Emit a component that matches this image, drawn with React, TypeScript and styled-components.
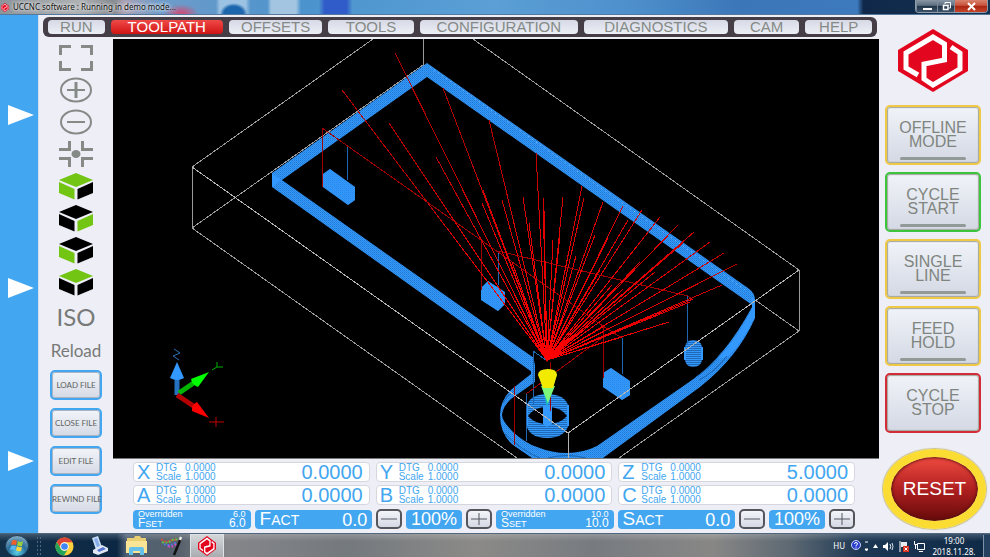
import React from "react";
import styled, { createGlobalStyle } from "styled-components";

const SANS = '"Liberation Sans", Arial, sans-serif';
const SLIM = 'Lato, "Liberation Sans", Arial, sans-serif';
const BLUE = "#43a6f0";
const GREY = "#858a87";

const GlobalStyle = createGlobalStyle`
  * { box-sizing: border-box; }
  body { margin: 0; background: #eeeef7; font-family: ${SANS}; }
  button { margin: 0; padding: 0; border: 0; background: none; font-family: inherit; cursor: pointer; }
  svg { display: block; }
`;

const Window = styled.div`
  display: grid;
  grid-template-rows: 15px 1fr 25px;
  min-height: 100vh;
`;

/* ---------- title bar ---------- */

const TitleBar = styled.header`
  display: flex;
  align-items: center;
  gap: 4px;
  padding-left: 1px;
  border-bottom: 1px solid #56789b;
  background:
    radial-gradient(ellipse 14px 11px at 23.6% 100%, #1c66ad 70%, transparent 100%),
    radial-gradient(ellipse 18px 10px at 18.3% 100%, #c4557f 20%, transparent 100%),
    linear-gradient(90deg, transparent 21.8%, #9cc2e3 22.2%, #9cc2e3 24.8%, transparent 25.3%, transparent 27%, #a3c5e2 27.4%, #a3c5e2 29.9%, transparent 30.4%, transparent 32.2%, #2f5cc8 32.8%, #2f5cc8 35%, transparent 35.6%),
    linear-gradient(90deg, #8d959b 0%, #aeb1b4 8%, #868b90 11.5%, #a9a1b5 12.5%, #6f9cc9 16%, #4b93cd 30%, #5b9fd6 50%, #4d8fcb 64%, #3b76b8 75%, #3d79bd 86.6%, #10294a 87.2%, #14304f 100%);
`;
const Title = styled.h1`
  flex: 1;
  margin: 0;
  font: 400 8px/14px "Noto Sans", sans-serif;
  color: #111;
  text-shadow: 0 0 3px #fff, 0 0 4px #fff;
`;
const WindowControls = styled.div`
  display: flex;
  align-self: flex-start;
  height: 13px;
  margin-right: 2px;
  border: 1px solid #8c9cab;
  border-top: 0;
  border-radius: 0 0 4px 4px;
  overflow: hidden;
`;
const WindowButton = styled.button<{ $w: number; $close?: boolean }>`
  display: grid;
  place-items: center;
  width: ${(p) => p.$w}px;
  border-left: 1px solid #7b8a99;
  background: ${(p) =>
    p.$close
      ? "linear-gradient(#d9836f, #c9523b 45%, #a72410 50%, #c8452a)"
      : "linear-gradient(#8a98a6, #5d6e80 45%, #22364a 50%, #3d5268)"};
`;

/* ---------- main frame ---------- */

const Main = styled.main`
  display: grid;
  grid-template-columns: 39px 1fr 111px;
  background: #eeeef7;
`;
const Drawers = styled.aside`
  display: flex;
  flex-direction: column;
  align-items: center;
  gap: 153px;
  padding: 90px 0 0 4px;
  background: ${BLUE};
  border-right: 1px solid #cfe0f3;
`;
const DrawerButton = styled.button`
  height: 20px;
`;
const Center = styled.div`
  display: flex;
  flex-direction: column;
  min-width: 0;
`;
const Tabs = styled.nav`
  display: grid;
  grid-template-columns: 57fr 113fr 94fr 86fr 159fr 145fr 66fr 67fr;
  gap: 6px;
  height: 20px;
  margin: 2px 2px 2px 4px;
  padding: 3px 5px;
  border-radius: 6px;
  background: #453e47;
`;
const Tab = styled.button<{ $active?: boolean }>`
  min-width: 0;
  border-radius: 4px;
  font-size: 15px;
  line-height: 14px;
  color: ${(p) => (p.$active ? "#fff" : GREY)};
  background: ${(p) =>
    p.$active ? "linear-gradient(#f04a48, #cf1414)" : "linear-gradient(#d7dae6, #eceff5)"};
`;
const Body = styled.div`
  display: grid;
  grid-template-columns: 74px 1fr;
  flex: 1;
`;

/* ---------- view tools ---------- */

const Tools = styled.aside`
  display: flex;
  flex-direction: column;
  align-items: center;
  padding-top: 3px;
`;
const ToolButton = styled.button`
  display: grid;
  place-items: center;
  height: 32px;
`;
const TextTool = styled.button<{ $size: number; $h: number }>`
  height: ${(p) => p.$h}px;
  font: ${(p) => p.$size}px/${(p) => p.$h}px ${SLIM};
  color: #777a77;
`;
const FileButtons = styled.div`
  display: flex;
  flex-direction: column;
  gap: 8px;
  margin-top: 4px;
`;
const FileButton = styled.button`
  display: grid;
  place-items: center;
  width: 52px;
  height: 30px;
  border: 2px solid ${BLUE};
  border-radius: 5px;
  background: linear-gradient(#f1f4f8, #d6dae5);
  box-shadow: inset 0 0 0 1px #aab4c2;
  font: 8px/12px ${SLIM};
  white-space: nowrap;
  color: #5f6360;
`;

/* ---------- work area ---------- */

const Work = styled.section`
  display: flex;
  flex-direction: column;
  min-width: 0;
`;
const Viewer = styled.div`
  flex: 1;
  background: #000;
  border-bottom: 1px solid #777;
`;
const Readouts = styled.div`
  display: flex;
  flex-direction: column;
  padding: 3px 24px 5px 20px;
`;
const AxisGrid = styled.div`
  display: grid;
  grid-template-columns: repeat(3, 1fr);
  gap: 3px 6px;
`;
const AxisBox = styled.div`
  display: grid;
  grid-template-columns: 19px 29px 1fr auto;
  align-items: center;
  height: 20px;
  padding: 0 6px 0 3px;
  border: 1px solid #d6d6de;
  border-radius: 4px;
  background: #fff;
  color: ${BLUE};
`;
const AxisName = styled.span`
  font-size: 20px;
  line-height: 18px;
`;
const AxisInfo = styled.span`
  font-size: 10px;
  line-height: 9px;
  white-space: pre-line;
`;
const AxisValue = styled.output`
  font-size: 20px;
  line-height: 18px;
`;
const FeedRow = styled.div`
  display: grid;
  grid-template-columns: repeat(2, 118fr 118fr 26px 56fr 26px);
  gap: 4px;
  height: 18px;
  margin-top: 5px;
`;
const FeedBox = styled.div<{ $double?: boolean }>`
  display: flex;
  flex-direction: ${(p) => (p.$double ? "column" : "row")};
  justify-content: ${(p) => (p.$double ? "center" : "space-between")};
  align-items: ${(p) => (p.$double ? "stretch" : "center")};
  padding: 0 5px;
  border-radius: 4px;
  background: ${BLUE};
  color: #fff;
`;
const FeedLine = styled.div<{ $size: number; $line: number }>`
  display: flex;
  justify-content: space-between;
  font-size: ${(p) => p.$size}px;
  line-height: ${(p) => p.$line}px;
`;
const FeedName = styled.span`
  font-size: 19px;
  line-height: 18px;
`;
const Small = styled.span<{ $size: number }>`
  font-size: ${(p) => p.$size}px;
`;
const FeedValue = styled.output`
  font-size: 18px;
  line-height: 18px;
`;
const Percent = styled.output`
  border-radius: 4px;
  background: ${BLUE};
  color: #fff;
  text-align: center;
  font-size: 18px;
  line-height: 18px;
`;
const StepButton = styled.button`
  display: grid;
  place-items: center;
  height: 20px;
  margin-top: -1px;
  border: 2px solid #55565c;
  border-radius: 5px;
  background: linear-gradient(#f3f5f9, #d5d9e4);
`;

/* ---------- command column ---------- */

const Commands = styled.aside`
  display: flex;
  flex-direction: column;
  align-items: center;
  padding: 14px 3px 0 0;
`;
const CommandList = styled.div`
  display: flex;
  flex-direction: column;
  gap: 7px;
  margin-top: 13px;
`;
const CommandButton = styled.button<{ $edge: string }>`
  display: flex;
  flex-direction: column;
  align-items: center;
  justify-content: center;
  gap: 8px;
  width: 96px;
  height: 60px;
  padding-top: 11px;
  border: 2px solid ${(p) => p.$edge};
  border-radius: 5px;
  background: linear-gradient(#f0f3f8, #d3d8e4);
  box-shadow: inset 0 0 1px 1px #a4a79d;
  font-size: 16px;
  line-height: 14px;
  color: #80857f;
`;
const Lamp = styled.span<{ $hidden?: boolean }>`
  width: 66px;
  height: 3px;
  border-radius: 2px;
  background: ${(p) => (p.$hidden ? "transparent" : "#929a98")};
`;
const ResetButton = styled.button`
  width: 103px;
  height: 80px;
  margin: 16px 0 3px 3px;
  border: 8px solid #fbdc32;
  border-radius: 50%;
  background: linear-gradient(#ef4a40, #b02020 50%, #650a0a) padding-box;
  box-shadow: 0 0 1px 1px #c9c18c, inset 0 0 3px 1px #5a1010;
  color: #fff;
  font-size: 19px;
`;

/* ---------- task bar ---------- */

const TaskBar = styled.footer`
  display: flex;
  align-items: center;
  border-top: 1px solid #4f6880;
  background:
    linear-gradient(rgba(255, 255, 255, 0.2), transparent 30%),
    linear-gradient(90deg, #12304a 0, #0c2743 11.8%, #4f6174 12.8%, #56606b 18%, #85868a 23%, #74797e 35%, #8b8a88 48%, #777b80 60%, #888786 72%, #5c6872 80%, #1c3753 87%, #0f2a47 100%);
`;
const StartButton = styled.button`
  margin: 0 7px 0 5px;
`;
const Grip = styled.span`
  width: 6px;
  height: 20px;
  background: radial-gradient(circle, #50687f 1px, transparent 1px) 0 0 / 3px 4px;
`;
const TaskButton = styled.button<{ $active?: boolean }>`
  display: grid;
  place-items: center;
  width: ${(p) => (p.$active ? 34 : 36)}px;
  height: 24px;
  border: ${(p) => (p.$active ? "1px solid #dfe3e6" : "0")};
  background: ${(p) => (p.$active ? "linear-gradient(#d4d7da, #a9adb1)" : "none")};
`;
const AppButtons = styled.div`
  display: flex;
  flex: 1;
  margin-left: 4px;
`;
const Tray = styled.div`
  display: flex;
  align-items: center;
  gap: 5px;
  color: #fff;
  font: 8px/12px "Noto Sans", sans-serif;
`;
const Clock = styled.time`
  width: 48px;
  text-align: center;
  line-height: 11px;
`;
const ShowDesktop = styled.button`
  align-self: stretch;
  width: 7px;
  border-left: 1px solid #7e93a8;
  background: #24425f;
`;

/* ---------- icons ---------- */

const Logo = ({ width, height }: { width: number; height: number }) => (
  <svg width={width} height={height} viewBox="0 0 70 63" preserveAspectRatio="none" aria-hidden="true">
    <path d="M35 0 70 21V42L35 63 0 42V21Z" fill="#e3061f" />
    <path d="M20 46 8 39V24L35 8 46.500 15V31L26 35V50L35 56 62 40V24L53 18" fill="none" stroke="#fff" strokeWidth="5" />
  </svg>
);

const Cube = ({ top, left, right }: { top: string; left: string; right: string }) => (
  <svg width="34" height="27" viewBox="0 0 34 27" aria-hidden="true">
    <path d="M17 0 34 7 17 14 0 7Z" fill={top} />
    <path d="M0 9 15.500 16V26.500L0 20Z" fill={left} />
    <path d="M34 9 18.500 16V26.500L34 20Z" fill={right} />
  </svg>
);

const LIME = "#72c613";
const cubes = [
  { name: "Top left view", top: LIME, left: LIME, right: "#000" },
  { name: "Right view", top: "#000", left: "#000", right: LIME },
  { name: "Left view", top: "#000", left: LIME, right: "#000" },
  { name: "Top view", top: LIME, left: "#000", right: "#000" },
];

/* ---------- tool path drawing ---------- */

const rays: number[][] = [
  [395, 53], [342, 90], [389, 123], [436, 157], [443, 88], [489, 120], [536, 153],
  [483, 190], [482, 203], [502, 200], [523, 197], [529, 223], [543, 197], [544, 210],
  [563, 197], [582, 186], [584, 198], [576, 256], [603, 202], [623, 206], [628, 220],
  [642, 210], [660, 217], [678, 225], [683, 243], [694, 232], [710, 242], [724, 253],
  [737, 264], [722, 285], [693, 299], [690, 302], [669, 322], [623, 289], [612, 285],
  [600, 270], [505, 250], [512, 262], [595, 235], [608, 238], [640, 262], [655, 272],
  [603, 327], [622, 337], [560, 235], [553, 240],
];

const blocks = [
  "323 174 330 169 355 187 355 200 348 205 323 187",
  "481 288 488 281 505 292 505 304 498 311 481 300",
  "603 373 611 368 630 381 630 395 622 400 603 387",
];

const Scene = () => (
  <svg width="100%" height="100%" viewBox="113 39 766 419" role="img" aria-label="Tool path">
    <defs>
      <pattern id="hatch" width="2" height="2" patternUnits="userSpaceOnUse">
        <rect width="2" height="2" fill="#3399ff" />
        <rect width="1" height="1" fill="#2277cf" />
        <rect x="1" y="1" width="1" height="1" fill="#2a88e4" />
      </pattern>
      <pattern id="rings" width="2" height="2" patternUnits="userSpaceOnUse">
        <rect width="2" height="2" fill="#3399ff" />
        <rect width="2" height="1" fill="#2069b6" />
      </pattern>
      <radialGradient id="ray" gradientUnits="userSpaceOnUse" cx="547" cy="360" r="300">
        <stop offset="0" stopColor="#ff0000" />
        <stop offset="0.45" stopColor="#e00000" />
        <stop offset="0.8" stopColor="#b40000" />
      </radialGradient>
    </defs>

    <g fill="none" stroke="#9a9a9a" shapeRendering="crispEdges">
      <path d="M192 228V167L373 39M473 39 799 270V331L619 458M423 39V65L192 228 517 458M423 65 799 331" />
    </g>

    <g fill="url(#hatch)">
      <path d="M427 63 272 173V187L282 180 427 77Z" />
      <path d="M427 63 748 288Q755 293 755 300V307L427 77Z" />
      <path d="M272 173 534 358V372H532L272 187Z" />
      <path d="M532 358Q535 361 535 365V382L515 396Q503 404 502 415 502 421 513 432 525 443 537 447 552 453 567 453 583 453 597 446L692 380Q725 357 752 307V297L755 300V318Q738 357 700 387L603 458H532L513 445Q500 434 500 415 500 400 512 389L531 374V360Z" />
    </g>
    <path d="M272 173V187L281 180Z" fill="#3399ff" />
    <path d="M755 300V317Q745 338 729 356L718 359Q738 337 752 309V297Z" fill="#3399ff" />
    <path d="M430 67 748 292" stroke="#8cc4fb" strokeDasharray="1 4" />
    <g fill="none" stroke="#1a63ad" strokeWidth="1">
      <path d="M699 380Q715 372 727 356M696 377Q710 368 722 352M505 434Q524 452 540 458M503 403Q506 396 514 391M548 458Q567 453 586 458" />
    </g>

    <g fill="#3399ff">
      {blocks.map((points) => (
        <polygon key={points} points={points} />
      ))}
    </g>
    <g fill="url(#hatch)" fillOpacity="0.5">
      {blocks.map((points) => (
        <polygon key={points} points={points} />
      ))}
    </g>
    <path d="M685 347Q686 340 693 340 701 340 702 347V360Q701 367 693 367 686 367 685 360Z" fill="url(#rings)" />
    <path d="M685 347V360M702 347V360" stroke="#3399ff" strokeWidth="2" />

    <path d="M526 408Q529 394 547 394 566 394 569 408V423Q566 438 547 438 528 438 526 423Z" fill="url(#rings)" />
    <path d="M528 416Q534 407 547 407 561 407 567 416 560 424 547 424 535 424 528 416Z" fill="#000" />
    <path d="M527 405V426M568 405V426" stroke="#3399ff" strokeWidth="2" />
    <path d="M543 405H552V424L547 427 543 424Z" fill="#3399ff" />

    <g fill="none" stroke="#1f66b3" shapeRendering="crispEdges">
      <path d="M347 145V180M498 251V285M687 296V345M622 338V374M533 351V405M526 394V441M533 351 546 360" />
    </g>
    <g fill="none" stroke="#a00000" shapeRendering="crispEdges">
      <path d="M322 187V128L603 326V378M481 240V290M498 251 688 296 693 300M514 386V445M526 394 602 338M550 362V411M603 326 622 338" />
    </g>
    <g stroke="url(#ray)" shapeRendering="crispEdges">
      {rays.map(([x, y]) => (
        <line key={`${x} ${y}`} x1={x} y1={y} x2="547" y2="360" />
      ))}
    </g>
    <path d="M540 350 547 362 555 350Z" fill="#f00" />

    <path d="M539 374 547 407 557 374Z" fill="#15bfc6" />
    <path d="M541 386 548 403 555 386Z" fill="#7cf77a" />
    <path d="M538 375Q538 369 548 369 557 369 557 375L553 388H543Z" fill="#f2ea00" />

    <g fill="none" stroke="#b4b4b4" shapeRendering="crispEdges">
      <path d="M192 167 568 433 799 270M568 433V458" />
    </g>

    <path d="M177 395V378" stroke="#2670c0" strokeWidth="5" />
    <path d="M170 378 177 362 184 378Q177 382 170 378Z" fill="#3399ff" />
    <path d="M179 393 195 382" stroke="#00b400" strokeWidth="5" />
    <path d="M191 379 209 372 198 387Q192 385 191 379Z" fill="#0f0" />
    <path d="M177 395 195 407" stroke="#b40000" strokeWidth="5" />
    <path d="M197 402 209 418 192 411Q191 405 197 402Z" fill="#f00" />
    <path d="M174 349 180 353 173 356 179 360" fill="none" stroke="#2b70b8" />
    <path d="M217 362V367H223M217 367 212 370" fill="none" stroke="#00b000" />
    <path d="M209 422H224M216 417V427" stroke="#c00000" />
  </svg>
);

/* ---------- data ---------- */

const tabs = ["RUN", "TOOLPATH", "OFFSETS", "TOOLS", "CONFIGURATION", "DIAGNOSTICS", "CAM", "HELP"];
const fileActions = ["LOAD FILE", "CLOSE FILE", "EDIT FILE", "REWIND FILE"];
const axes = [
  { name: "X", value: "0.0000" },
  { name: "Y", value: "0.0000" },
  { name: "Z", value: "5.0000" },
  { name: "A", value: "0.0000" },
  { name: "B", value: "0.0000" },
  { name: "C", value: "0.0000" },
];
const feeds = [
  { letter: "F", set: "6.0" },
  { letter: "S", set: "10.0" },
];
const commands = [
  { lines: ["OFFLINE", "MODE"], edge: "#efc845", lamp: true },
  { lines: ["CYCLE", "START"], edge: "#3cc43c", lamp: true },
  { lines: ["SINGLE", "LINE"], edge: "#efc845", lamp: true },
  { lines: ["FEED", "HOLD"], edge: "#efc845", lamp: true },
  { lines: ["CYCLE", "STOP"], edge: "#d42c36", lamp: false },
];

export default function App() {
  return (
    <Window>
      <GlobalStyle />
      <TitleBar>
        <Logo width={8} height={9} />
        <Title>UCCNC software : Running in demo mode...</Title>
        <WindowControls>
          <WindowButton $w={21} aria-label="Minimize">
            <svg width="9" height="9"><path d="M0 6H9V8H0Z" fill="#fff" /></svg>
          </WindowButton>
          <WindowButton $w={17} aria-label="Restore">
            <svg width="9" height="9" fill="none" stroke="#fff">
              <path d="M3 2V.5H8.500V6H7" />
              <path d="M1.500 3.500H6V7.500H1.500Z" strokeWidth="1.500" />
            </svg>
          </WindowButton>
          <WindowButton $w={33} $close aria-label="Close">
            <svg width="9" height="9"><path d="M1 1 8 8M8 1 1 8" stroke="#fff" strokeWidth="2" /></svg>
          </WindowButton>
        </WindowControls>
      </TitleBar>

      <Main>
        <Drawers>
          {["Jog panel", "Macro panel", "Tool panel"].map((name) => (
            <DrawerButton key={name} aria-label={name}>
              <svg width="26" height="20"><path d="M0 0 26 10 0 20Z" fill="#fff" /></svg>
            </DrawerButton>
          ))}
        </Drawers>

        <Center>
          <Tabs>
            {tabs.map((name) => (
              <Tab key={name} $active={name === "TOOLPATH"}>{name}</Tab>
            ))}
          </Tabs>
          <Body>
            <Tools>
              <ToolButton aria-label="Fit to view">
                <svg width="34" height="26" fill="none" stroke={GREY} strokeWidth="3">
                  <path d="M1.500 10V1.500H12M22 1.500H32.500V10M32.500 16V24.500H22M12 24.500H1.500V16" />
                </svg>
              </ToolButton>
              <ToolButton aria-label="Zoom in">
                <svg width="34" height="26" fill="none" stroke={GREY}>
                  <ellipse cx="17" cy="13" rx="15" ry="11.500" strokeWidth="2" />
                  <path d="M8 13H26" strokeWidth="2" />
                  <path d="M17 5V21" strokeWidth="3" />
                </svg>
              </ToolButton>
              <ToolButton aria-label="Zoom out">
                <svg width="34" height="26" fill="none" stroke={GREY}>
                  <ellipse cx="17" cy="13" rx="15" ry="11.500" strokeWidth="2" />
                  <path d="M8 13H26" strokeWidth="2" />
                </svg>
              </ToolButton>
              <ToolButton aria-label="Centre view">
                <svg width="34" height="26" fill="none" stroke={GREY} strokeWidth="3">
                  <path d="M0 8.500H10.500V0M34 8.500H23.500V0M0 17.500H10.500V26M34 17.500H23.500V26" />
                  <ellipse cx="17" cy="13" rx="4.500" ry="4" fill={GREY} stroke="none" />
                </svg>
              </ToolButton>
              {cubes.map(({ name, ...faces }) => (
                <ToolButton key={name} aria-label={name}><Cube {...faces} /></ToolButton>
              ))}
              <TextTool $size={24} $h={38}>ISO</TextTool>
              <TextTool $size={17} $h={30}>Reload</TextTool>
              <FileButtons>
                {fileActions.map((name) => (
                  <FileButton key={name}>{name}</FileButton>
                ))}
              </FileButtons>
            </Tools>

            <Work>
              <Viewer><Scene /></Viewer>
              <Readouts>
                <AxisGrid>
                  {axes.map((axis) => (
                    <AxisBox key={axis.name}>
                      <AxisName>{axis.name}</AxisName>
                      <AxisInfo>{"DTG\nScale"}</AxisInfo>
                      <AxisInfo>{"0.0000\n1.0000"}</AxisInfo>
                      <AxisValue>{axis.value}</AxisValue>
                    </AxisBox>
                  ))}
                </AxisGrid>
                <FeedRow>
                  {feeds.map(({ letter, set }) => (
                    <React.Fragment key={letter}>
                      <FeedBox $double>
                        <FeedLine $size={9} $line={8}>
                          <span>Overridden</span>
                          <span>{set}</span>
                        </FeedLine>
                        <FeedLine $size={12} $line={10}>
                          <span>{letter}<Small $size={9}>SET</Small></span>
                          <span>{set}</span>
                        </FeedLine>
                      </FeedBox>
                      <FeedBox>
                        <FeedName>{letter}<Small $size={14}>ACT</Small></FeedName>
                        <FeedValue>0.0</FeedValue>
                      </FeedBox>
                      <StepButton aria-label={`Decrease ${letter} override`}>
                        <svg width="16" height="12"><path d="M0 6H16" stroke="#55565c" /></svg>
                      </StepButton>
                      <Percent>100%</Percent>
                      <StepButton aria-label={`Increase ${letter} override`}>
                        <svg width="16" height="12"><path d="M0 6H16M8 0V12" stroke="#55565c" /></svg>
                      </StepButton>
                    </React.Fragment>
                  ))}
                </FeedRow>
              </Readouts>
            </Work>
          </Body>
        </Center>

        <Commands>
          <Logo width={70} height={63} />
          <CommandList>
            {commands.map(({ lines, edge, lamp }) => (
              <CommandButton key={lines.join(" ")} $edge={edge}>
                <span>{lines[0]}<br />{lines[1]}</span>
                <Lamp $hidden={!lamp} />
              </CommandButton>
            ))}
          </CommandList>
          <ResetButton>RESET</ResetButton>
        </Commands>
      </Main>

      <TaskBar>
        <StartButton aria-label="Start">
          <svg width="24" height="22" viewBox="0 0 24 22">
            <defs>
              <radialGradient id="orb" cx="50%" cy="80%" r="80%">
                <stop offset="0" stopColor="#5bd0e8" />
                <stop offset="0.5" stopColor="#2a6d9c" />
                <stop offset="1" stopColor="#8fb0c4" />
              </radialGradient>
            </defs>
            <ellipse cx="12" cy="11" rx="11.500" ry="10.500" fill="url(#orb)" stroke="#1b3d58" />
            <path d="M7 6Q9 4 12 6L11 10Q8 9 6 10Z" fill="#f0602a" />
            <path d="M13 6Q16 8 18 6L17 11Q14 12 12 10Z" fill="#9cd03a" />
            <path d="M6 11Q8 10 11 11L10 15Q7 14 5 15Z" fill="#5ab8f0" />
            <path d="M12 11Q14 13 17 12L16 16Q13 17 11 15Z" fill="#fbd33c" />
          </svg>
        </StartButton>
        <Grip />
        <AppButtons>
          <TaskButton aria-label="Chrome">
            <svg width="19" height="19" viewBox="0 0 20 20">
              <circle cx="10" cy="10" r="9.500" fill="#fcd03c" />
              <path d="M1.800 5.200A9.500 9.500 0 0 1 18.400 5.500H10A4.500 4.500 0 0 0 5.800 11.500Z" fill="#dc4437" />
              <path d="M1.800 5.200A9.500 9.500 0 0 0 9.500 19.500L13.800 12.300A4.500 4.500 0 0 1 6 12.200Z" fill="#23a45a" />
              <circle cx="10" cy="10" r="4.500" fill="#fff" />
              <circle cx="10" cy="10" r="3.500" fill="#4285f4" />
            </svg>
          </TaskButton>
          <TaskButton aria-label="Scanner">
            <svg width="18" height="20" viewBox="0 0 18 20">
              <path d="M1 2 7 0 11 11 5 14Z" fill="#c7dcf5" />
              <path d="M3 3 6 2 9 10 6 11Z" fill="#86abe8" />
              <path d="M2 14 11 9 17 12V15L7 19 2 17Z" fill="#dfe8f4" />
              <path d="M6 14 12 11 15 13 8 16Z" fill="#5575d0" />
            </svg>
          </TaskButton>
          <TaskButton aria-label="Explorer">
            <svg width="21" height="20" viewBox="0 0 21 20">
              <path d="M1 2H8L9 0H14L15 2H20V17H1Z" fill="#e9cf72" />
              <path d="M0 5H21V17H0Z" fill="#fae596" />
              <path d="M3 19V13Q3 11 5 11H16Q18 11 18 13V19H14V15H7V19Z" fill="#65c0ea" />
            </svg>
          </TaskButton>
          <TaskButton aria-label="Paint wand">
            <svg width="22" height="20" viewBox="0 0 22 20">
              <path d="M20 2 13 19" stroke="#111" strokeWidth="2.500" />
              <path d="M20 1 19 4" stroke="#eee" strokeWidth="2.500" />
              <g strokeWidth="2" strokeDasharray="2 1.500" fill="none">
                <path d="M0 3Q4 7 9 5T17 4" stroke="#e04a3a" />
                <path d="M1 6Q6 8 11 4L18 3" stroke="#5fc04a" />
                <path d="M3 8Q8 11 16 6" stroke="#4a7be0" />
                <path d="M7 10Q11 12 15 8" stroke="#c84ac0" />
              </g>
            </svg>
          </TaskButton>
          <TaskButton $active aria-label="UCCNC">
            <Logo width={18} height={20} />
          </TaskButton>
        </AppButtons>
        <Tray>
          <span>HU</span>
          <svg width="18" height="14">
            <circle cx="6" cy="6" r="4.500" fill="#2a3fd0" stroke="#c8d0ff" />
            <path d="M4.500 5Q4.500 3.500 6 3.500T7.500 5Q7 6 6 6.500V7.500M6 8.500V9.500" fill="none" stroke="#fff" />
            <path d="M15 3H18M15 10H18L16.500 12Z" stroke="#fff" fill="#fff" />
          </svg>
          <svg width="5" height="4"><path d="M0 4 2.500 0 5 4Z" fill="#fff" /></svg>
          <svg width="11" height="11">
            <path d="M0 4H2L5 1V10L2 7H0Z" fill="#fff" />
            <path d="M7 3Q8.500 5.500 7 8M9 2Q11 5.500 9 9" fill="none" stroke="#dde6ee" />
          </svg>
          <svg width="10" height="11">
            <path d="M1 0V11" stroke="#fff" />
            <path d="M2 1H8V6H2Z" fill="#e8ecf0" />
            <path d="M4 5H10V11H4Z" fill="#d9301e" />
            <path d="M5.500 6.500 8.500 9.500M8.500 6.500 5.500 9.500" stroke="#fff" />
          </svg>
          <svg width="11" height="11" fill="none" stroke="#fff">
            <path d="M3.500 2.500H10.500V8.500H3.500ZM5 10.500H9M.5 0V3.500H3M1.500 4V8" />
          </svg>
          <Clock>19:00<br />2018.11.28.</Clock>
          <ShowDesktop aria-label="Show desktop" />
        </Tray>
      </TaskBar>
    </Window>
  );
}
